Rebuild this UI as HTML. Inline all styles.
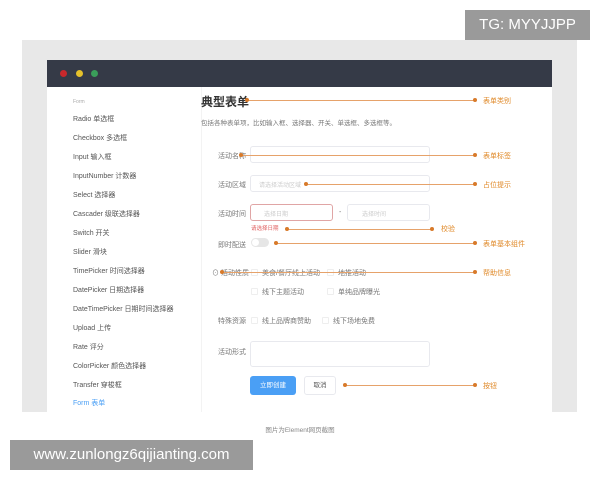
<!DOCTYPE html>
<html><head><meta charset="utf-8"><style>
*{margin:0;padding:0;box-sizing:border-box}
body{width:600px;height:480px;background:#fff;position:relative;overflow:hidden;font-family:"Liberation Sans","Noto Sans CJK SC",sans-serif;color:#555}
.a{position:absolute}
.gray{left:22px;top:40px;width:555px;height:372px;background:#e8e8e8}
.win{left:47px;top:60px;width:505px;height:352px;background:#fff}
.bar{left:47px;top:60px;width:505px;height:27px;background:#353a47}
.dot{width:7px;height:7px;border-radius:50%;top:70px}
.side{font-size:7px;color:#555}
.lbl{font-size:7px;color:#777}
.in{border:1px solid #e8e9ee;border-radius:3px;background:#fff}
.or{color:#e08a2a;font-size:7px}
.ln{height:1px;background:#e6a26a}
.od{width:4px;height:4px;border-radius:50%;background:#d87a2a}
.cb{width:7px;height:7px;border:1px solid #eee;border-radius:1px}
</style></head><body>
<div class="a gray"></div>
<div class="a win"></div>
<div class="a bar"></div>
<div class="a dot" style="left:60px;background:#c8282c"></div>
<div class="a dot" style="left:76px;background:#e5c12b"></div>
<div class="a dot" style="left:91px;background:#3a9e5a"></div>
<div class="a" style="left:201px;top:87px;width:1px;height:325px;background:#f3f3f3"></div>

<div class="a side" style="left:73px;top:99px;font-size:5px;color:#aaa">Form</div>
<div class="a side" style="left:73px;top:114px">Radio 单选框</div>
<div class="a side" style="left:73px;top:133px">Checkbox 多选框</div>
<div class="a side" style="left:73px;top:152px">Input 输入框</div>
<div class="a side" style="left:73px;top:171px">InputNumber 计数器</div>
<div class="a side" style="left:73px;top:190px">Select 选择器</div>
<div class="a side" style="left:73px;top:209px">Cascader 级联选择器</div>
<div class="a side" style="left:73px;top:228px">Switch 开关</div>
<div class="a side" style="left:73px;top:247px">Slider 滑块</div>
<div class="a side" style="left:73px;top:266px">TimePicker 时间选择器</div>
<div class="a side" style="left:73px;top:285px">DatePicker 日期选择器</div>
<div class="a side" style="left:73px;top:304px">DateTimePicker 日期时间选择器</div>
<div class="a side" style="left:73px;top:323px">Upload 上传</div>
<div class="a side" style="left:73px;top:342px">Rate 评分</div>
<div class="a side" style="left:73px;top:361px">ColorPicker 颜色选择器</div>
<div class="a side" style="left:73px;top:380px">Transfer 穿梭框</div>
<div class="a side" style="left:73px;top:398px;color:#4a9ff5">Form 表单</div>

<div class="a" style="left:201px;top:93px;font-size:12px;color:#333;font-weight:bold">典型表单</div>
<div class="a" style="left:201px;top:117px;font-size:6.5px;color:#777">包括各种表单项，比如输入框、选择器、开关、单选框、多选框等。</div>

<div class="a lbl" style="left:218px;top:151px">活动名称</div>
<div class="a in" style="left:250px;top:146px;width:180px;height:17px"></div>
<div class="a lbl" style="left:218px;top:180px">活动区域</div>
<div class="a in" style="left:250px;top:175px;width:180px;height:17px"></div>
<div class="a lbl" style="left:259px;top:180px;color:#ccc;font-size:6px">请选择活动区域</div>
<div class="a lbl" style="left:218px;top:209px">活动时间</div>
<div class="a in" style="left:250px;top:204px;width:83px;height:17px;border-color:#e0a5a5"></div>
<div class="a lbl" style="left:264px;top:209px;color:#ccc;font-size:6px">选择日期</div>
<div class="a lbl" style="left:339px;top:209px">-</div>
<div class="a in" style="left:347px;top:204px;width:83px;height:17px"></div>
<div class="a lbl" style="left:362px;top:209px;color:#ccc;font-size:6px">选择时间</div>
<div class="a" style="left:251px;top:224px;font-size:5.5px;color:#e06060">请选择日期</div>
<div class="a lbl" style="left:218px;top:240px">即时配送</div>
<div class="a" style="left:251px;top:238px;width:18px;height:9px;border-radius:5px;background:#e6e6e6"></div>
<div class="a" style="left:252px;top:239px;width:7px;height:7px;border-radius:50%;background:#fff"></div>
<div class="a lbl" style="left:212px;top:268px">⊙ 活动性质</div>
<div class="a cb" style="left:251px;top:269px"></div><div class="a lbl" style="left:262px;top:268px">美食/餐厅线上活动</div>
<div class="a cb" style="left:327px;top:269px"></div><div class="a lbl" style="left:338px;top:268px">地推活动</div>
<div class="a cb" style="left:251px;top:288px"></div><div class="a lbl" style="left:262px;top:287px">线下主题活动</div>
<div class="a cb" style="left:327px;top:288px"></div><div class="a lbl" style="left:338px;top:287px">单纯品牌曝光</div>
<div class="a lbl" style="left:218px;top:316px">特殊资源</div>
<div class="a cb" style="left:251px;top:317px"></div><div class="a lbl" style="left:262px;top:316px">线上品牌商赞助</div>
<div class="a cb" style="left:322px;top:317px"></div><div class="a lbl" style="left:333px;top:316px">线下场地免费</div>
<div class="a lbl" style="left:218px;top:347px">活动形式</div>
<div class="a in" style="left:250px;top:341px;width:180px;height:26px"></div>
<div class="a" style="left:250px;top:376px;width:46px;height:19px;border-radius:3px;background:#4a9ff5;color:#fff;font-size:6.5px;text-align:center;line-height:19px">立即创建</div>
<div class="a in" style="left:304px;top:376px;width:32px;height:19px;font-size:6.5px;text-align:center;line-height:17px;color:#555">取消</div>

<div class="a ln" style="left:247px;top:100px;width:228px"></div><div class="a od" style="left:245px;top:98px"></div><div class="a od" style="left:473px;top:98px"></div><div class="a or" style="left:483px;top:96px">表单类别</div>
<div class="a ln" style="left:241px;top:155px;width:234px"></div><div class="a od" style="left:239px;top:153px"></div><div class="a od" style="left:473px;top:153px"></div><div class="a or" style="left:483px;top:151px">表单标签</div>
<div class="a ln" style="left:306px;top:184px;width:169px"></div><div class="a od" style="left:304px;top:182px"></div><div class="a od" style="left:473px;top:182px"></div><div class="a or" style="left:483px;top:180px">占位提示</div>
<div class="a ln" style="left:287px;top:229px;width:145px"></div><div class="a od" style="left:285px;top:227px"></div><div class="a od" style="left:430px;top:227px"></div><div class="a or" style="left:441px;top:224px">校验</div>
<div class="a ln" style="left:276px;top:243px;width:199px"></div><div class="a od" style="left:274px;top:241px"></div><div class="a od" style="left:473px;top:241px"></div><div class="a or" style="left:483px;top:239px">表单基本组件</div>
<div class="a ln" style="left:222px;top:272px;width:253px"></div><div class="a od" style="left:220px;top:270px"></div><div class="a od" style="left:473px;top:270px"></div><div class="a or" style="left:483px;top:268px">帮助信息</div>
<div class="a ln" style="left:345px;top:385px;width:130px"></div><div class="a od" style="left:343px;top:383px"></div><div class="a od" style="left:473px;top:383px"></div><div class="a or" style="left:483px;top:381px">按钮</div>

<div class="a" style="left:0;width:600px;top:424px;text-align:center;font-size:6.5px;color:#888">图片为Element网页截图</div>
<div class="a" style="left:465px;top:10px;width:125px;height:30px;background:#9a9a9a;color:#fff;font-size:15px;text-align:center;line-height:30px">TG: MYYJJPP</div>
<div class="a" style="left:10px;top:440px;width:243px;height:30px;background:#9a9a9a;color:#fff;font-size:15px;text-align:center;line-height:30px">www.zunlongz6qijianting.com</div>
</body></html>
